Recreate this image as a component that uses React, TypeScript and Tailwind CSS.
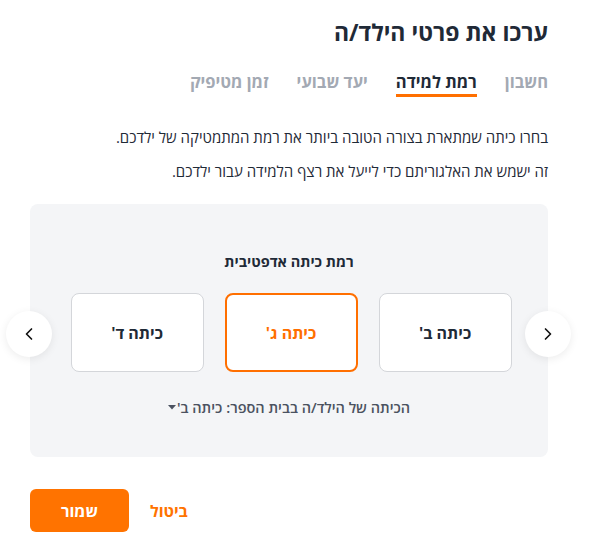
import { ChevronLeft, ChevronRight } from "lucide-react";

const tabs = [
  { label: "חשבון", active: false },
  { label: "רמת למידה", active: true },
  { label: "יעד שבועי", active: false },
  { label: "זמן מטיפיק", active: false },
];

const grades = [
  { label: "כיתה ב'", selected: false },
  { label: "כיתה ג'", selected: true },
  { label: "כיתה ד'", selected: false },
];

export default function App() {
  return (
    <div
      dir="rtl"
      className="min-h-screen bg-white pl-[30px] pr-[44px] pt-[18px] text-[#1f2933]"
      style={{ fontFamily: '"Open Sans", "Noto Sans", "DejaVu Sans", sans-serif' }}
    >
      <h1 className="text-[23px] font-bold leading-7 text-[#1f2a37]">ערכו את פרטי הילד/ה</h1>

      {/* tabs */}
      <div className="mt-[25px] flex gap-[28px]">
        {tabs.map((t) => (
          <div key={t.label} className="flex flex-col">
            <span
              className={`text-[16.5px] font-bold leading-[22px] ${
                t.active ? "text-[#1f2a37]" : "text-[#a3a9b3]"
              }`}
            >
              {t.label}
            </span>
            <span className={`mt-[1px] h-[3px] ${t.active ? "bg-[#ff6f00]" : "bg-transparent"}`} />
          </div>
        ))}
      </div>

      <p className="mt-[30px] text-[15px] leading-5 text-[#1f2a37]">
        בחרו כיתה שמתארת בצורה הטובה ביותר את רמת המתמטיקה של ילדכם.
      </p>
      <p className="mt-[14px] text-[15px] leading-5 text-[#1f2a37]">
        זה ישמש את האלגוריתם כדי לייעל את רצף הלמידה עבור ילדכם.
      </p>

      {/* grade panel */}
      <div className="relative mt-[23px] h-[253px] rounded-lg bg-[#f4f5f7] pt-[48px]">
        <div className="text-center text-[14.5px] font-bold leading-5 text-[#1f2a37]">רמת כיתה אדפטיבית</div>

        <div className="mt-[21px] flex justify-center gap-[21px] pl-[4px]">
          {grades.map((g) => (
            <div
              key={g.label}
              className={`flex h-[79px] w-[133px] items-center justify-center rounded-lg bg-white text-[16px] font-bold ${
                g.selected
                  ? "border-2 border-[#ff6f00] text-[#ff6f00]"
                  : "border border-[#d4d6da] text-[#1f2a37]"
              }`}
            >
              {g.label}
            </div>
          ))}
        </div>

        <div className="mt-[25px] flex items-center justify-center gap-1 text-[14.5px] font-semibold text-[#4b5260]">
          <span>הכיתה של הילד/ה בבית הספר:</span>
          <span className="flex items-center">
            כיתה ב'
            <svg width="8" height="5" viewBox="0 0 8 5" className="mr-[1px]">
              <path d="M0 0h8L4 4.5z" fill="#4b5260" />
            </svg>
          </span>
        </div>

        <button className="absolute right-[-23px] top-[107px] flex h-[46px] w-[46px] items-center justify-center rounded-full bg-white shadow-[0_2px_8px_rgba(0,0,0,0.08)]">
          <ChevronRight size={20} strokeWidth={2} color="#111" />
        </button>
        <button className="absolute left-[-24px] top-[107px] flex h-[46px] w-[46px] items-center justify-center rounded-full bg-white shadow-[0_2px_8px_rgba(0,0,0,0.08)]">
          <ChevronLeft size={20} strokeWidth={2} color="#111" />
        </button>
      </div>

      {/* actions */}
      <div className="mt-[32px] flex items-center justify-end gap-[21px]">
        <button className="text-[16px] font-bold text-[#ff7300]">ביטול</button>
        <button className="h-[43px] w-[99px] rounded-md bg-[#ff7300] text-[16px] font-bold text-white">שמור</button>
      </div>
    </div>
  );
}
